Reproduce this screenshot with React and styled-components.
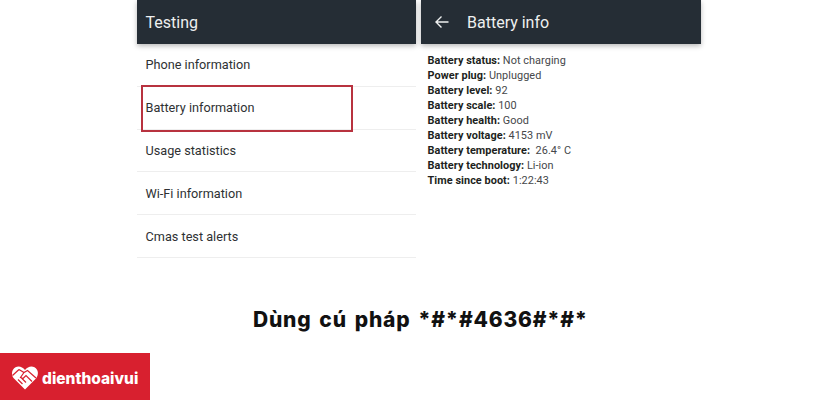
import React from 'react'
import styled, { createGlobalStyle } from 'styled-components'

const GlobalStyle = createGlobalStyle`
  html, body { margin: 0; padding: 0; background: #fff; }
  body { font-family: Roboto, "Liberation Sans", sans-serif; }
`
const Page = styled.div`
  width: 840px;
  height: 400px;
  overflow: hidden;
  display: flex;
  flex-direction: column;
`
const Screens = styled.div`
  display: flex;
  gap: 5px;
  padding-left: 137px;
  height: 259px;
`
const Screen = styled.div`
  width: ${p => p.$w}px;
  display: flex;
  flex-direction: column;
`
const AppBar = styled.div`
  height: 44px;
  flex: none;
  background: #252d35;
  box-shadow: 0 2px 5px rgba(0, 0, 0, 0.28);
  color: #eef0f0;
  display: flex;
  align-items: center;
  padding-left: ${p => p.$pad}px;
  gap: 18px;
  font-size: 16px;
  position: relative;
`
const BackIcon = styled.svg`
  width: 14px;
  height: 14px;
  flex: none;
`
const Menu = styled.div`
  display: flex;
  flex-direction: column;
  position: relative;
`
const MenuRow = styled.div`
  height: 41.8px;
  display: flex;
  align-items: center;
  padding-left: 8.5px;
  border-bottom: 1px solid #eeeeee;
  font-size: 12.7px;
  color: #2e3133;
`
const Highlight = styled.div`
  position: absolute;
  left: 4px;
  top: 41px;
  width: 208px;
  height: 43px;
  border: 2px solid #b8323f;
  pointer-events: none;
`
const Info = styled.div`
  padding: 9px 0 0 6.5px;
  font-size: 10.9px;
  line-height: 15px;
  letter-spacing: 0.05px;
  color: #45474a;
`
const InfoLine = styled.div`
  white-space: pre;
`
const InfoLabel = styled.b`
  color: #1d1f21;
  font-weight: 700;
`
const Caption = styled.div`
  margin-top: 47px;
  height: 28px;
  line-height: 28px;
  padding-left: 253px;
  font-family: Inter, "Liberation Sans", sans-serif;
  font-weight: 800;
  font-size: 21px;
  letter-spacing: 0.8px;
  word-spacing: 2.5px;
  color: #111;
  white-space: nowrap;
`
const Logo = styled.div`
  margin-top: 19px;
  width: 150px;
  height: 47px;
  flex: none;
  background: #d8202f;
  display: flex;
  align-items: center;
  padding-left: 11px;
  box-sizing: border-box;
  gap: 3px;
`
const LogoMark = styled.svg`
  width: 28px;
  height: 28px;
  flex: none;
`
const LogoText = styled.span`
  font-family: Inter, "Liberation Sans", sans-serif;
  font-weight: 800;
  font-size: 15.5px;
  color: #fff;
  margin-top: 3px;
`

const menuItems = ['Phone information', 'Battery information', 'Usage statistics', 'Wi-Fi information', 'Cmas test alerts']
const batteryInfo = [
  ['Battery status:', ' Not charging'],
  ['Power plug:', ' Unplugged'],
  ['Battery level:', ' 92'],
  ['Battery scale:', ' 100'],
  ['Battery health:', ' Good'],
  ['Battery voltage:', ' 4153 mV'],
  ['Battery temperature:', '  26.4° C'],
  ['Battery technology:', ' Li-ion'],
  ['Time since boot:', ' 1:22:43'],
]

const App = () => (
  <Page>
    <GlobalStyle />
    <Screens>
      <Screen $w={279}>
        <AppBar $pad={8.5}>Testing</AppBar>
        <Menu>
          {menuItems.map(item => <MenuRow key={item}>{item}</MenuRow>)}
          <Highlight />
        </Menu>
      </Screen>
      <Screen $w={280}>
        <AppBar $pad={14}>
          <BackIcon viewBox="0 0 14 14" fill="none" stroke="#eef0f0" strokeWidth="1.4">
            <path d="M13.5 7H1M6.5 1.5L1 7l5.500 5.500" />
          </BackIcon>
          Battery info
        </AppBar>
        <Info>
          {batteryInfo.map(([label, value]) => (
            <InfoLine key={label}><InfoLabel>{label}</InfoLabel>{value}</InfoLine>
          ))}
        </Info>
      </Screen>
    </Screens>
    <Caption>Dùng cú pháp *#*#4636#*#*</Caption>
    <Logo>
      <LogoMark viewBox="0 0 28 28">
        <path d="M14 7C11.500 3.500 7.500 2.500 4.500 4.200C.5 6.500 .2 11.500 2.500 15L14 26.500L25 15.500C28 11.500 27.500 6.500 23.500 4.200C20.500 2.500 16.500 3.500 14 7Z" fill="#fff" />
        <path d="M1.500 12.500L8 6.500M8 6.500L13 9.500L16.500 7.500L25 15M13 9.500L9.500 14.500L12 15.500L15 12.500L21 18.500M7 16.500L11.500 21M10 14.500L15 19.500" fill="none" stroke="#d8202f" strokeWidth="1.2" />
      </LogoMark>
      <LogoText>dienthoaivui</LogoText>
    </Logo>
  </Page>
)

export default App
